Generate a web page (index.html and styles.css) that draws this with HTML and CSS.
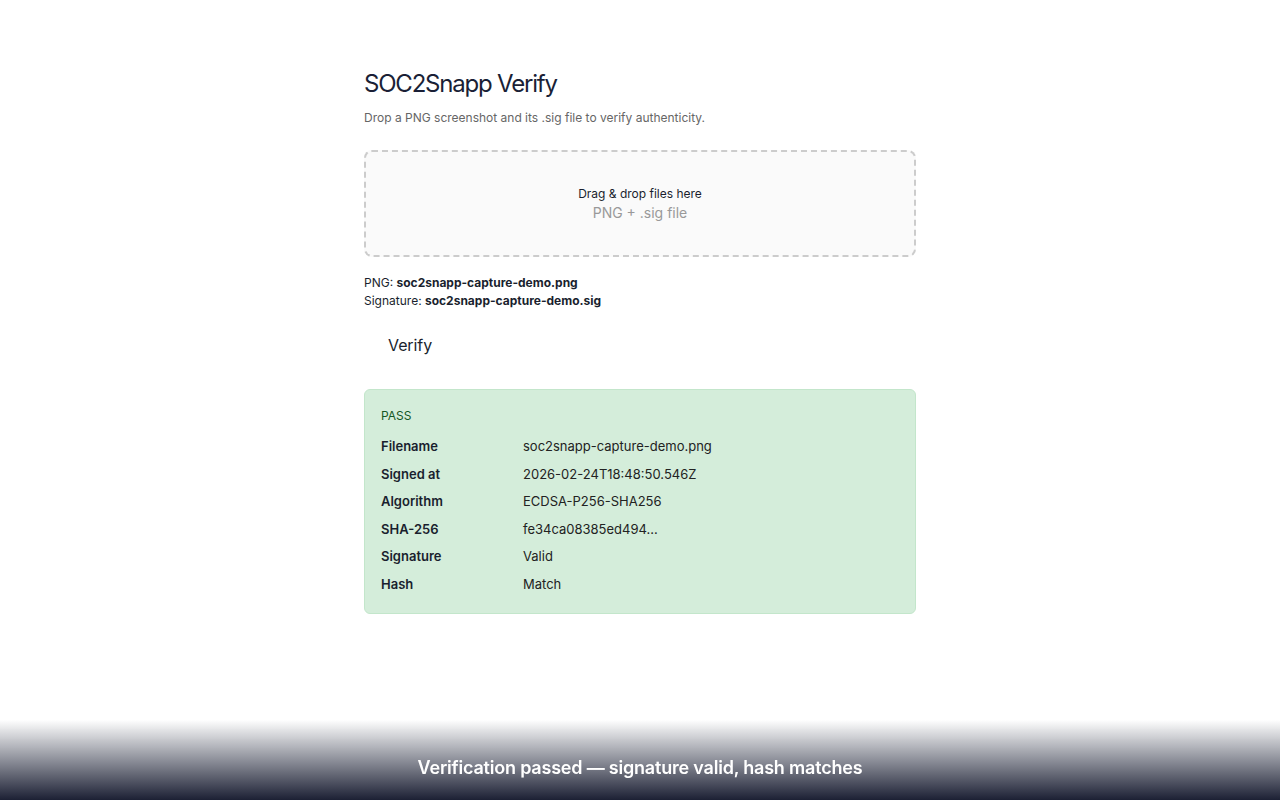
FILE: index.html
```html
<!DOCTYPE html>
<html lang="en">
<head>
<meta charset="utf-8">
<title>SOC2Snapp Verify</title>
<link rel="stylesheet" href="styles.css">
</head>
<body>
<main class="page">
  <h1 class="title">SOC2Snapp Verify</h1>
  <p class="subtitle">Drop a PNG screenshot and its .sig file to verify authenticity.</p>
  <div class="dropzone">
    <div class="dz-main">Drag &amp; drop files here</div>
    <div class="dz-hint">PNG + .sig file</div>
  </div>
  <div class="files">
    <div>PNG: <strong>soc2snapp-capture-demo.png</strong></div>
    <div>Signature: <strong>soc2snapp-capture-demo.sig</strong></div>
  </div>
  <button class="verify-btn" type="button">Verify</button>
  <section class="result">
    <div class="status">PASS</div>
    <table class="details">
      <tr><th>Filename</th><td>soc2snapp-capture-demo.png</td></tr>
      <tr><th>Signed at</th><td>2026-02-24T18:48:50.546Z</td></tr>
      <tr><th>Algorithm</th><td>ECDSA-P256-SHA256</td></tr>
      <tr><th>SHA-256</th><td>fe34ca08385ed494...</td></tr>
      <tr><th>Signature</th><td>Valid</td></tr>
      <tr><th>Hash</th><td>Match</td></tr>
    </table>
  </section>
</main>
<div class="caption">
  <span>Verification passed — signature valid, hash matches</span>
</div>
</body>
</html>
```
FILE: styles.css
```css
* { box-sizing: border-box; }
html, body { margin: 0; padding: 0; background: #ffffff; }
body {
  font-family: Inter, "Noto Sans", "Liberation Sans", sans-serif;
  color: #1a1f2e;
  height: 800px;
  overflow: hidden;
}
.page {
  width: 552px;
  margin: 0 auto;
  padding-top: 69px;
}
.title {
  margin: 0;
  font-size: 24px;
  font-weight: 400;
  line-height: 30px;
  color: #1a1f36;
  letter-spacing: -1.2px;
}
.subtitle {
  margin: 11px 0 0;
  font-size: 12px;
  line-height: 15px;
  color: #666666;
}
.dropzone {
  margin-top: 25px;
  height: 107px;
  border: 2px dashed #cccccc;
  border-radius: 8px;
  background: #fafafa;
  display: flex;
  flex-direction: column;
  align-items: center;
  padding-top: 34px;
  gap: 3px;
}
.dz-main {
  font-size: 12px;
  line-height: 15px;
  color: #1a1f2e;
}
.dz-hint {
  font-size: 14px;
  line-height: 17px;
  color: #999999;
}
.files {
  margin-top: 17px;
  font-size: 12px;
  line-height: 18px;
  color: #1a1f2e;
}
.files strong { font-weight: 700; }
.verify-btn {
  display: block;
  margin-top: 18px;
  padding: 8px 24px;
  border: none;
  background: #ffffff;
  font-family: inherit;
  font-size: 16px;
  line-height: 19px;
  color: #1a1f2e;
  letter-spacing: -0.1px;
}
.result {
  margin-top: 26px;
  background: #d4edda;
  border: 1px solid #c3e6cb;
  border-radius: 6px;
  padding: 18px 16px 15px;
}
.status {
  font-size: 12px;
  line-height: 15px;
  color: #155724;
}
.details {
  margin-top: 10px;
  border-collapse: collapse;
  font-size: 13px;
  line-height: 15.5px;
}
.details th {
  text-align: left;
  font-weight: 600;
  width: 142px;
  padding: 6px 0;
  color: #1a1f2e;
}
.details td {
  padding: 6px 0;
  color: #222222;
}
.caption {
  position: fixed;
  left: 0;
  right: 0;
  bottom: 0;
  height: 80px;
  background: linear-gradient(to bottom, rgba(255,255,255,0) 0%, rgba(175,177,184,1) 35%, #1c2034 100%);
  display: flex;
  justify-content: center;
  align-items: flex-end;
  padding-bottom: 21px;
}
.caption span {
  color: #ffffff;
  font-size: 18px;
  font-weight: 600;
  line-height: 22px;
  letter-spacing: -0.2px;
}
```
